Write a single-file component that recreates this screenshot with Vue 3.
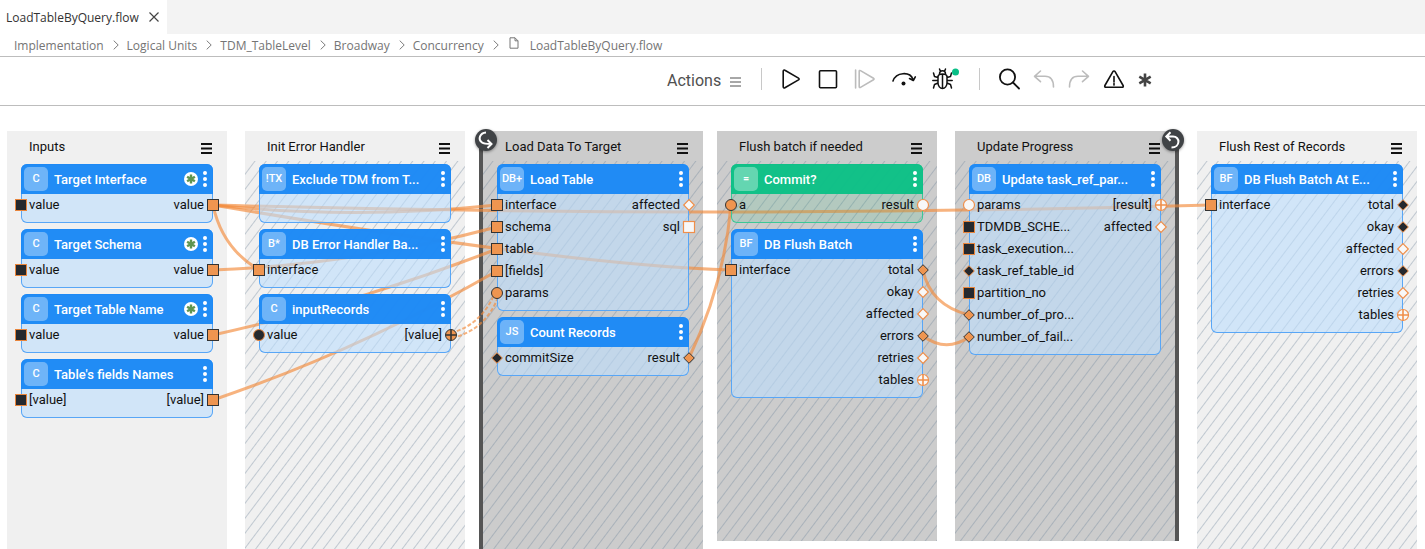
<script setup>
const crumbs = ['Implementation', 'Logical Units', 'TDM_TableLevel', 'Broadway', 'Concurrency']

// Port format: [label, shape, state]
const stages = [
  {
    title: 'Inputs', tone: 'light', plain: true,
    nodes: [
      { badge: 'C', title: 'Target Interface', star: true, ins: [['value', 'square', 'const']], outs: [['value', 'square', 'linked']] },
      { badge: 'C', title: 'Target Schema', star: true, ins: [['value', 'square', 'const']], outs: [['value', 'square', 'linked']] },
      { badge: 'C', title: 'Target Table Name', star: true, ins: [['value', 'square', 'const']], outs: [['value', 'square', 'linked']] },
      { badge: 'C', title: "Table's fields Names", ins: [['[value]', 'square', 'const']], outs: [['[value]', 'square', 'linked']] },
    ],
  },
  {
    title: 'Init Error Handler', tone: 'light',
    nodes: [
      { badge: '!TX', title: 'Exclude TDM from T...', ins: [], outs: [] },
      { badge: 'B*', title: 'DB Error Handler Ba...', ins: [['interface', 'square', 'linked']], outs: [] },
      { badge: 'C', title: 'inputRecords', ins: [['value', 'circle', 'const']], outs: [['[value]', 'cross', 'linked']] },
    ],
  },
  {
    title: 'Load Data To Target', tone: 'dark', loop: 'start',
    nodes: [
      {
        badge: 'DB+', title: 'Load Table',
        ins: [['interface', 'square', 'linked'], ['schema', 'square', 'linked'], ['table', 'square', 'linked'], ['[fields]', 'square', 'linked'], ['params', 'circle', 'linked']],
        outs: [['affected', 'diamond', 'open'], ['sql', 'square', 'open']],
      },
      { badge: 'JS', title: 'Count Records', ins: [['commitSize', 'diamond', 'const']], outs: [['result', 'diamond', 'linked']] },
    ],
  },
  {
    title: 'Flush batch if needed', tone: 'dark', short: true,
    nodes: [
      { badge: '=', title: 'Commit?', green: true, ins: [['a', 'circle', 'linked']], outs: [['result', 'circle', 'open']] },
      {
        badge: 'BF', title: 'DB Flush Batch',
        ins: [['interface', 'square', 'linked']],
        outs: [['total', 'diamond', 'linked'], ['okay', 'diamond', 'open'], ['affected', 'diamond', 'open'], ['errors', 'diamond', 'linked'], ['retries', 'diamond', 'open'], ['tables', 'cross', 'open']],
      },
    ],
  },
  {
    title: 'Update Progress', tone: 'dark', short: true, loop: 'end',
    nodes: [
      {
        badge: 'DB', title: 'Update task_ref_par...',
        ins: [['params', 'circle', 'open'], ['TDMDB_SCHE...', 'square', 'const'], ['task_execution...', 'square', 'const'], ['task_ref_table_id', 'diamond', 'const'], ['partition_no', 'square', 'const'], ['number_of_pro...', 'diamond', 'linked'], ['number_of_fail...', 'diamond', 'linked']],
        outs: [['[result]', 'cross', 'open'], ['affected', 'diamond', 'open']],
      },
    ],
  },
  {
    title: 'Flush Rest of Records', tone: 'light',
    nodes: [
      {
        badge: 'BF', title: 'DB Flush Batch At E...',
        ins: [['interface', 'square', 'linked']],
        outs: [['total', 'diamond', 'const'], ['okay', 'diamond', 'const'], ['affected', 'diamond', 'open'], ['errors', 'diamond', 'const'], ['retries', 'diamond', 'open'], ['tables', 'cross', 'open']],
      },
    ],
  },
]

// Link curves in canvas coordinates (origin: top-left of the canvas)
const links = [
  'M213 99Q355 114 497 99',
  'M213 99Q712 113 1211 99',
  'M213 99Q222 142 259 164',
  'M213 99Q566 159 731 164',
  'M213 164Q353 159 497 121',
  'M213 229Q355 198 497 143',
  'M213 294Q355 246 497 165',
  'M689 252Q724 179 731 99',
  'M923 164Q930 199 969 209',
  'M923 230Q946 247 969 231',
]
const iterateLinks = ['M451 227Q481 219 495 187', 'M452 232Q486 224 499 189']
</script>

<template>
  <div class="page">
    <header class="tabs">
      <div class="tab">
        <span>LoadTableByQuery.flow</span>
        <button type="button" class="close" aria-label="Close">
          <svg width="10" height="10" viewBox="0 0 10 10"><path d="M.5.5l9 9M9.5.5l-9 9" /></svg>
        </button>
      </div>
    </header>
    <nav class="crumbs" aria-label="Path">
      <template v-for="c in crumbs" :key="c">
        <a href="#">{{ c }}</a>
        <svg class="chev" width="6" height="10" viewBox="0 0 6 10"><path d="M.7.6L5.2 5 .7 9.4" /></svg>
      </template>
      <svg class="file" width="10" height="12" viewBox="0 0 10 12"><path d="M1 .8h5l3 3v7.4H1zM6 .8v3h3" /></svg>
      <a href="#">LoadTableByQuery.flow</a>
    </nav>
    <div class="toolbar">
      <button type="button" class="actions">
        Actions
        <svg width="11" height="10" viewBox="0 0 11 10"><path d="M0 1h11M0 5h11M0 9h11" stroke="#505050" /></svg>
      </button>
      <i class="rule"></i>
      <div class="group debug">
        <button type="button" aria-label="Run">
          <svg width="22" height="24" viewBox="0 0 22 24"><path d="M3.2 4.2c0-1 .9-1.5 1.7-1L18.500 11.100c.8.5.8 1.300 0 1.800L4.900 20.800c-.8.5-1.700 0-1.700-1z" /></svg>
        </button>
        <button type="button" aria-label="Stop">
          <svg width="22" height="24" viewBox="0 0 22 24"><rect x="2.500" y="3.800" width="17" height="17" rx="1" /></svg>
        </button>
        <button type="button" aria-label="Step" disabled>
          <svg width="22" height="24" viewBox="0 0 22 24" class="dim"><path d="M1.600 3v18M5.200 4.400c0-.8.6-1.200 1.300-.8l13 7.600c.7.400.7 1.200 0 1.600l-13 7.600c-.7.400-1.300 0-1.300-.8z" /></svg>
        </button>
        <button type="button" aria-label="Step over">
          <svg width="26" height="24" viewBox="0 0 26 24"><path d="M2 14C5 5 19 4 22 12.500M18.500 11.500l3.800 2 2-3.600" /><circle cx="12.500" cy="16.500" r="2" fill="#111" stroke="none" /></svg>
        </button>
        <button type="button" aria-label="Debug">
          <svg width="27" height="24" viewBox="0 0 27 24">
            <path d="M6 10c0-2 1.500-3 4.500-3s4.500 1 4.500 3v6c0 3-2 5.500-4.500 5.500S6 19 6 16zM10.500 7v14.500M7.500 7c0-4.500 6-4.500 6 0M8.300 4L7.500 2M12.700 4l.8-2M6 10.500L2.500 9.500 1.500 6M6 13.500H.8M6 16l-3.500 1.500-1 3.500M15 10.500l3.500-1 1-3.500M15 13.500h5.200M15 16l3.500 1.500 1 3.500" stroke-width="1.500" />
            <circle cx="23.500" cy="5" r="3.500" fill="#08bf86" stroke="none" />
          </svg>
        </button>
      </div>
      <i class="rule"></i>
      <div class="group edit">
        <button type="button" aria-label="Search">
          <svg width="22" height="24" viewBox="0 0 22 24"><circle cx="9.500" cy="10" r="7.600" stroke-width="1.800" /><path d="M15 15.500l6 6" stroke-width="1.800" /></svg>
        </button>
        <button type="button" aria-label="Undo" disabled>
          <svg width="22" height="24" viewBox="0 0 22 24" class="dim"><path d="M7.500 4L1.500 9.300l6 5.300M1.500 9.300H12c5.500 0 8.500 3.500 8.500 10.700" /></svg>
        </button>
        <button type="button" aria-label="Redo" disabled>
          <svg width="22" height="24" viewBox="0 0 22 24" class="dim"><path d="M14.500 4l6 5.300-6 5.300M20.500 9.300H10C4.500 9.300 1.500 12.800 1.500 20" /></svg>
        </button>
        <button type="button" aria-label="Warnings">
          <svg width="22" height="24" viewBox="0 0 22 24"><path d="M9.900 4.600c.5-.9 1.700-.9 2.200 0l8 13.900c.5.900 0 1.800-1 1.800H2.900c-1 0-1.500-.9-1-1.800zM11 9.500v5.500M11 16.500v1.600" /></svg>
        </button>
        <button type="button" aria-label="Required">
          <svg width="14" height="24" viewBox="0 0 14 24"><path d="M7 6.500v13M1.300 9.700l11.400 6.600M12.700 9.700L1.300 16.300" stroke="#444" stroke-width="2.600" stroke-linecap="butt" /></svg>
        </button>
      </div>
    </div>

    <main class="canvas">
      <svg class="links" width="1425" height="443" viewBox="0 0 1425 443">
        <path v-for="d in links" :key="d" :d="d" />
        <path v-for="d in iterateLinks" :key="d" :d="d" class="dashed" />
      </svg>
      <section v-for="s in stages" :key="s.title" class="stage" :class="[s.tone, s.loop && 'loop-' + s.loop, { short: s.short, plain: s.plain }]">
        <div v-if="s.loop" class="marker">
          <svg v-if="s.loop === 'start'" width="22" height="22" viewBox="0 0 22 22"><path d="M11 3.500C5 4 2.500 10 7 13.500c2 1.500 5 1.500 9 1.500M12.500 11l4 4-4 4" /></svg>
          <svg v-else width="22" height="22" viewBox="0 0 22 22"><path d="M4.500 7.500H11c7.500 0 7.500 11-1.500 11M8.500 3.200L4.300 7.500l4.200 4.200" /></svg>
        </div>
        <header class="stage-head">
          <h2>{{ s.title }}</h2>
          <button type="button" :aria-label="s.title + ' menu'">
            <svg width="11" height="11" viewBox="0 0 11 11"><path d="M0 1h11M0 5.500h11M0 10h11" /></svg>
          </button>
        </header>
        <div class="stage-body">
          <article v-for="n in s.nodes" :key="n.title" class="node" :class="{ green: n.green }">
            <header class="node-head">
              <span class="badge">{{ n.badge }}</span>
              <h3>{{ n.title }}</h3>
              <svg v-if="n.star" class="star" width="14" height="14" viewBox="0 0 14 14"><circle cx="7" cy="7" r="7" /><path d="M7 2.500v9M3.100 4.700l7.800 4.600M10.900 4.700L3.100 9.300" /></svg>
              <button type="button" :aria-label="n.title + ' menu'">
                <svg width="4" height="16" viewBox="0 0 4 16"><circle cx="2" cy="2" r="2" /><circle cx="2" cy="8" r="2" /><circle cx="2" cy="14" r="2" /></svg>
              </button>
            </header>
            <div class="ports">
              <ul v-for="(list, side) in { ins: n.ins, outs: n.outs }" :key="side" :class="side">
                <li v-for="[label, shape, state] in list" :key="label">
                  <svg class="port" :class="state" width="14" height="14" viewBox="0 0 14 14">
                    <rect v-if="shape === 'square'" x="1.500" y="1.500" width="11" height="11" />
                    <path v-else-if="shape === 'diamond'" d="M7 1.700L12.300 7 7 12.300 1.700 7z" />
                    <circle v-else cx="7" cy="7" r="5.500" />
                    <path v-if="shape === 'cross'" class="plus" d="M7 1.500v11M1.500 7h11" />
                  </svg>
                  <span>{{ label }}</span>
                </li>
              </ul>
            </div>
          </article>
        </div>
      </section>
    </main>
  </div>
</template>

<style>
body {
  margin: 0;
  background: #fff;
}
</style>

<style scoped>
.page {
  display: flex;
  flex-direction: column;
  height: 100vh;
  overflow: hidden;
  font-family: Roboto, "Liberation Sans", sans-serif;
  font-size: 13px;
  color: #111;
}
button {
  display: flex;
  align-items: center;
  padding: 0;
  border: 0;
  background: none;
  color: inherit;
  font: inherit;
}
svg {
  display: block;
  flex: none;
  fill: none;
}
h2,
h3,
ul {
  margin: 0;
  padding: 0;
  list-style: none;
}

.tabs {
  display: flex;
  flex: none;
  height: 34px;
  background: #f3f3f3;
}
.tab {
  display: flex;
  align-items: center;
  gap: 10px;
  padding: 0 8px 0 6px;
  background: #fff;
  color: #333;
  font: 12px "Open Sans", "Noto Sans", sans-serif;
}
.close svg {
  stroke: #444;
  stroke-width: 1.2;
}
.crumbs {
  display: flex;
  flex: none;
  align-items: center;
  height: 22px;
  padding-left: 14px;
  border-bottom: 1px solid #bdbdbd;
  font: 12px/20px "Open Sans", "Noto Sans", sans-serif;
}
.crumbs a {
  padding-top: 2px;
  color: #757575;
  text-decoration: none;
}
.chev {
  margin: 0 8px 0 9px;
  stroke: #7c7c7c;
}
.file {
  margin: 0 11px 4px 2px;
  stroke: #777;
}

.toolbar {
  display: flex;
  flex: none;
  align-items: center;
  height: 48px;
  border-bottom: 1px solid #bdbdbd;
}
.toolbar::before {
  content: "";
  flex: 22;
}
.toolbar::after {
  content: "";
  flex: 9;
}
.actions {
  gap: 9px;
  margin-bottom: 2px;
  color: #505050;
  font-size: 16px;
}
.actions svg {
  margin-top: 4px;
}
.rule {
  width: 1px;
  height: 22px;
  margin: 0 18px 4px 20px;
  background: #c8c8c8;
}
.group {
  display: flex;
  align-items: center;
  margin-bottom: 4px;
}
.group svg {
  stroke: #111;
  stroke-width: 1.6;
  stroke-linejoin: round;
  stroke-linecap: round;
}
.group svg.dim {
  stroke: #bcbcbc;
}
.debug {
  gap: 15px;
}
.edit {
  gap: 13px;
}

.canvas {
  position: relative;
  display: flex;
  flex: 1;
  min-height: 0;
  padding: 25px 7px 0;
  overflow: hidden;
}
.links {
  position: absolute;
  top: 0;
  left: 0;
  z-index: 1;
  stroke: #f28a3a;
  stroke-width: 3;
  stroke-opacity: 0.65;
  pointer-events: none;
}
.links .dashed {
  stroke-width: 2;
  stroke-dasharray: 4 2;
}
.stage {
  position: relative;
  display: flex;
  flex: none;
  flex-direction: column;
  width: 220px;
  margin-right: 18px;
}
.stage.short {
  margin-bottom: 8px;
}
.light {
  background: #f0f0f0;
}
.dark {
  background: #ccc;
}
.loop-start {
  margin-right: 14px;
}
.loop-end {
  margin-right: 22px;
}
.loop-start::before,
.loop-end::before {
  content: "";
  position: absolute;
  top: 9px;
  bottom: 0;
  width: 4px;
  background: #555;
}
.loop-start::before {
  left: -4px;
}
.loop-end::before {
  right: -4px;
}
.marker {
  position: absolute;
  top: -2px;
  left: -8px;
  z-index: 3;
  border-radius: 50%;
  background: #404346;
  box-shadow: 0 1px 3px rgba(0, 0, 0, 0.4);
}
.loop-end .marker {
  right: -9px;
  left: auto;
}
.marker svg {
  stroke: #fff;
  stroke-width: 2;
}
.stage-head {
  display: flex;
  align-items: center;
  justify-content: space-between;
  height: 30px;
  padding: 0 15px 0 22px;
}
.stage-head h2 {
  font-size: 13px;
  font-weight: 400;
}
.stage-head svg {
  margin-top: 4px;
  stroke: #111;
  stroke-width: 2;
}
.stage-body {
  display: flex;
  flex: 1;
  flex-direction: column;
  gap: 6px;
  padding: 3px 14px 0;
  background: repeating-linear-gradient(127deg, transparent 0 7px, rgba(112, 134, 156, 0.38) 8px, transparent 9px);
}
.plain .stage-body {
  background: none;
}

.node {
  position: relative;
  z-index: 2;
  width: 192px;
  min-height: 59px;
  border-radius: 6px;
  background: rgba(188, 222, 253, 0.6);
  box-shadow: inset 0 0 0 1px #58a6f6;
}
.node.green {
  background: rgba(37, 187, 120, 0.15);
  box-shadow: inset 0 0 0 1px #3cc796;
}
.node-head {
  display: flex;
  align-items: center;
  height: 30px;
  padding: 0 6px 0 3px;
  border-radius: 6px 6px 0 0;
  background: rgba(27, 136, 245, 0.97);
  color: #fff;
}
.green .node-head {
  background: rgba(12, 192, 134, 0.97);
}
.badge {
  width: 24px;
  height: 24px;
  border-radius: 5px;
  background: rgba(255, 255, 255, 0.35);
  font-size: 11px;
  font-weight: 500;
  line-height: 24px;
  text-align: center;
}
.node-head h3 {
  flex: 1;
  padding-top: 2px;
  margin-left: 6px;
  font-size: 13px;
  font-weight: 500;
  line-height: 16px;
  white-space: nowrap;
}
.node-head button svg {
  fill: #fff;
}
.star {
  margin-right: 5px;
  fill: #fff;
}
.star path {
  stroke: #5f9550;
  stroke-width: 2.4;
}
.ports {
  display: flex;
  justify-content: space-between;
  padding-bottom: 7px;
}
.ports li {
  display: flex;
  align-items: center;
  gap: 2px;
  height: 22px;
  white-space: nowrap;
}
.ports .ins li {
  gap: 1px;
}
.ports span {
  padding-bottom: 2px;
}
.ins li {
  margin-left: -7px;
}
.outs li {
  flex-direction: row-reverse;
  margin-right: -7px;
}
.port {
  fill: #ef9550;
  stroke: #333;
}
.port.const {
  fill: #25292e;
  stroke: #e8853c;
}
.port.open {
  fill: #f8f8f8;
  stroke: #f08f4a;
  stroke-width: 1.2;
}
.port .plus {
  stroke-width: 1.6;
}
</style>
